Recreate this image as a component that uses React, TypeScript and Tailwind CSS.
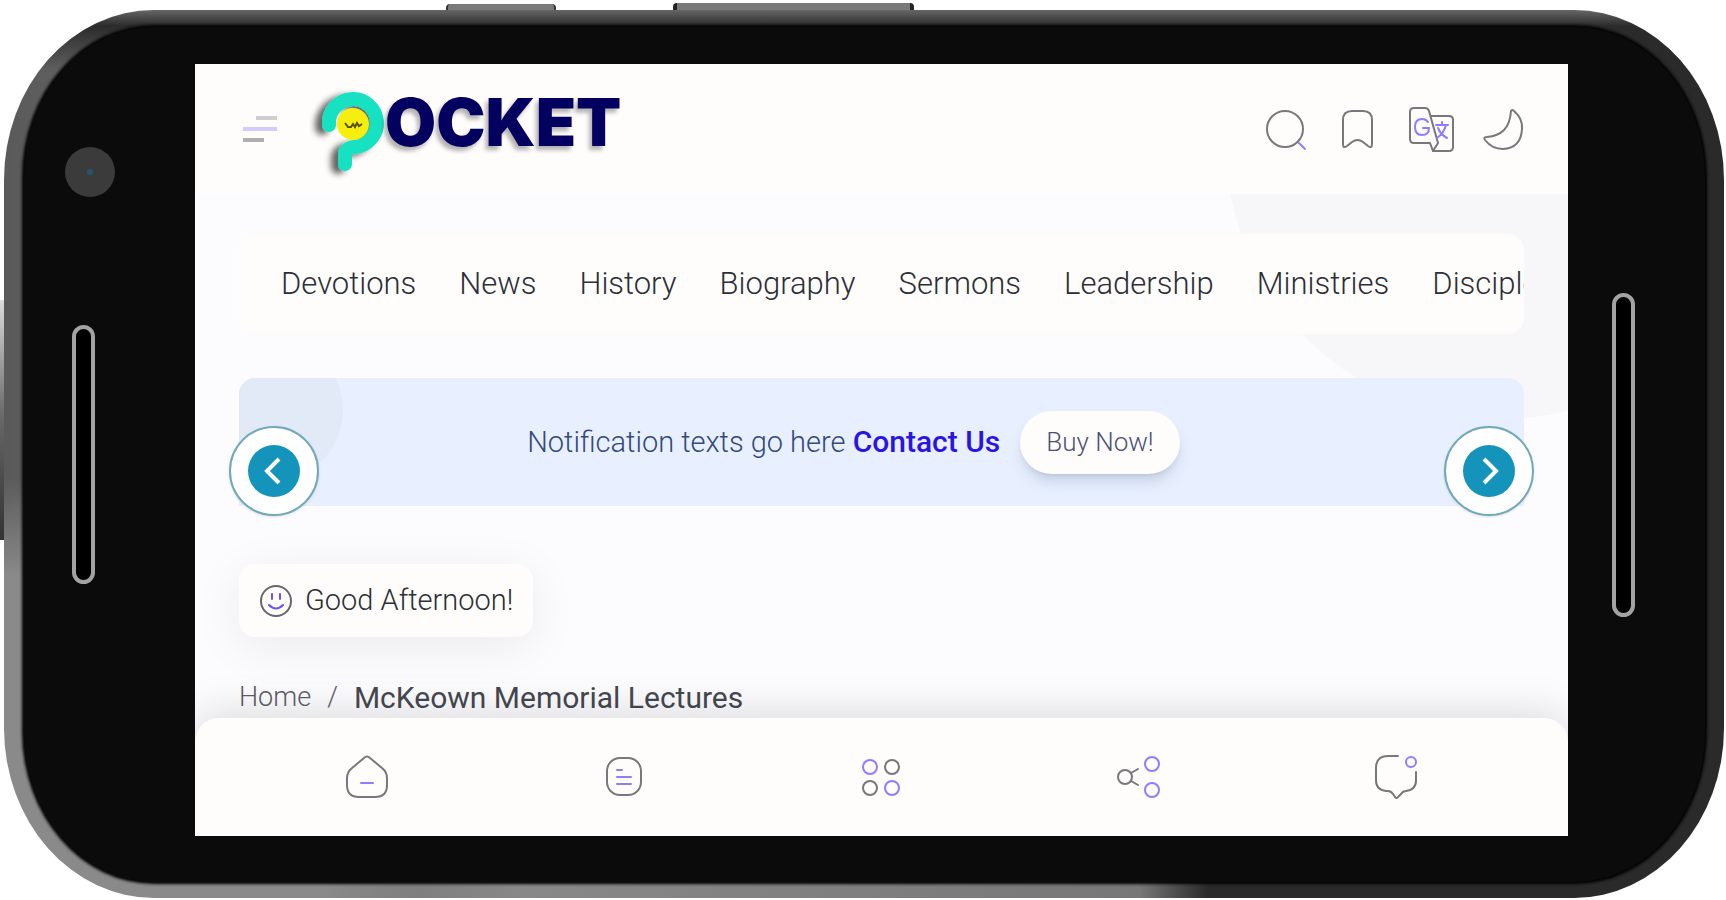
import { ReactNode } from "react";

const tabs = ["Devotions", "News", "History", "Biography", "Sermons", "Leadership", "Ministries", "Disciple"];

const INK = "#77777c";
const ACCENT = "#8f7dff";

function Icon({ children }: { children: ReactNode }) {
  return (
    <svg
      viewBox="0 0 48 48"
      className="size-12"
      fill="none"
      stroke={INK}
      strokeWidth="2"
      strokeLinecap="round"
      strokeLinejoin="round"
      aria-hidden="true"
    >
      {children}
    </svg>
  );
}

const headerActions = [
  {
    label: "Search",
    icon: (
      <Icon>
        <circle cx="21" cy="24" r="18" />
        <path d="M35 38l6 6" stroke={ACCENT} />
      </Icon>
    ),
  },
  {
    label: "Bookmarks",
    icon: (
      <Icon>
        <path d="M7 39V15q0-9 9-9h11q9 0 9 9v24q0 5-4 2l-5-4q-5.500-4-11 0l-5 4q-4 3-4-2z" />
      </Icon>
    ),
  },
  {
    label: "Translate",
    icon: (
      <Icon>
        <path d="M2 7q0-4 4-4h11q3 0 4 3l9 32-5 8-3-8H6q-4 0-4-4z" />
        <path d="M23 11h18q4 0 4 4v27q0 4-4 4H25" />
        <path d="M20 17q-2-3-6-3-7 0-7 8t7 8q7 0 7-7h-6" stroke={ACCENT} />
        <path d="M28 20h12M34 17v3M38 20q-2 8-9 13M30 23q3 7 9 10" stroke={ACCENT} />
      </Icon>
    ),
  },
  {
    label: "Dark mode",
    icon: (
      <Icon>
        <path d="M31 6q1-2 3 0 9 8 8 18-1 19-19 20-11 0-18-9-2-3 2-3 11-1 17-7t7-19z" />
      </Icon>
    ),
  },
];

const bottomActions = [
  {
    label: "Home page",
    icon: (
      <Icon>
        <path d="M21 5q3-3 6 0l12 10q5 4 5 10v7q0 12-12 12H16Q4 44 4 32v-7q0-6 5-10z" />
        <path d="M18 30h12" stroke={ACCENT} />
      </Icon>
    ),
  },
  {
    label: "Articles",
    icon: (
      <Icon>
        <rect x="7" y="5" width="34" height="37" rx="13" />
        <path d="M17 17h5M17 24h14M17 31h14" stroke={ACCENT} />
      </Icon>
    ),
  },
  {
    label: "Menu",
    icon: (
      <Icon>
        <circle cx="13" cy="14" r="7" stroke={ACCENT} />
        <circle cx="35" cy="14" r="7" />
        <circle cx="13" cy="35" r="7" />
        <circle cx="35" cy="35" r="7" stroke={ACCENT} />
      </Icon>
    ),
  },
  {
    label: "Share",
    icon: (
      <Icon>
        <circle cx="10" cy="24" r="7" />
        <path d="M16 20l7-4M16 28l7 4" />
        <circle cx="37" cy="11" r="7" stroke={ACCENT} />
        <circle cx="37" cy="37" r="7" stroke={ACCENT} />
      </Icon>
    ),
  },
  {
    label: "Comments",
    icon: (
      <Icon>
        <path d="M26 3H16Q4 3 4 15v12q0 10 10 11h2q3 0 5 3l2 3q1 2 3 0l3-3q2-3 5-3 10-1 10-11v-8" />
        <circle cx="39" cy="9" r="5" stroke={ACCENT} />
      </Icon>
    ),
  },
];

function Logo() {
  return (
    <a href="#" aria-label="Pocket" className="flex items-center pb-1.5">
      <svg viewBox="0 0 76 84" className="h-[84px] w-[76px] overflow-visible" fill="none" aria-hidden="true">
        <defs>
          <filter id="logo-shadow" x="-40%" y="-40%" width="180%" height="180%">
            <feDropShadow dx="-7" dy="3" stdDeviation="3" floodColor="#000" floodOpacity="0.6" />
          </filter>
        </defs>
        <path
          d="M20 41A24 24 0 1 1 46 63Q36 64 36 71V80"
          stroke="#12e2c2"
          strokeWidth="14"
          strokeLinecap="round"
          filter="url(#logo-shadow)"
        />
        <circle cx="44" cy="40" r="16" fill="#f6ee0c" />
        <path d="M36 39l3 4h3l2-3 2 3 2-4 2 3 3-2" stroke="#56520a" strokeWidth="2" />
      </svg>
      <span className="pb-2 font-[Inter,sans-serif] text-[66px] leading-[80px] font-black text-[#03005f] [text-shadow:-3px_4px_4px_rgba(0,0,0,0.3)]">
        OCKET
      </span>
    </a>
  );
}

function Arrow({ label, d, className }: { label: string; d: string; className: string }) {
  return (
    <button
      type="button"
      aria-label={label}
      className={`absolute top-12 flex size-[90px] items-center justify-center rounded-full border-2 border-[#6fa9ba] bg-white shadow-sm ${className}`}
    >
      <span className="flex size-[52px] items-center justify-center rounded-full bg-[#1494bb]">
        <svg viewBox="0 0 32 32" className="size-8" fill="none" stroke="white" strokeWidth="4" aria-hidden="true">
          <path d={d} />
        </svg>
      </span>
    </button>
  );
}

function Screen() {
  return (
    <div className="flex min-w-0 flex-1 flex-col overflow-hidden bg-[#fcfcff] font-[Roboto,sans-serif] font-light text-[#2c2f36]">
      <header className="relative z-10 flex h-[130px] items-center justify-between bg-[#fffdfc] pr-10 pl-12">
        <div className="flex items-center">
          <button type="button" aria-label="Open menu" className="mr-8 flex w-[34px] flex-col gap-[7px]">
            <span className="h-1 w-[21px] self-end bg-[#cfcfcf]" />
            <span className="h-1 w-full bg-[#d3caff]" />
            <span className="h-1 w-[21px] bg-[#b0b0b0]" />
          </button>
          <Logo />
        </div>
        <div className="flex items-center gap-6">
          {headerActions.map((action) => (
            <button key={action.label} type="button" aria-label={action.label}>
              {action.icon}
            </button>
          ))}
        </div>
      </header>

      <main className="relative flex-1 px-[44px] pt-10">
        <div className="pointer-events-none absolute inset-0 overflow-hidden">
          <div className="absolute -top-[380px] -right-[208px] h-[605px] w-[550px] rounded-full bg-[#f7f7fa]" />
        </div>

        <nav className="relative flex h-[100px] items-center gap-[43px] overflow-hidden rounded-2xl bg-[#fffdfc] pl-[42px]">
          {tabs.map((tab) => (
            <a key={tab} href="#" className="text-[31px] whitespace-nowrap">
              {tab}
            </a>
          ))}
        </nav>

        <section className="relative mt-11 h-32">
          <div className="relative flex h-full items-center justify-center overflow-hidden rounded-t-2xl bg-[#e8f0ff] pr-14">
            <div className="absolute -top-10 -left-10 size-36 rounded-full bg-[#e2eaf8]" />
            <p className="relative text-[29px] whitespace-nowrap text-[#34497c]">
              Notification texts go here{" "}
              <a href="#" className="text-[30px] font-medium text-[#2a14e4]">
                Contact Us
              </a>
            </p>
            <button
              type="button"
              className="relative ml-5 h-[63px] rounded-full bg-[#fffdfc] px-[26px] text-[26px] text-[#4a5274] shadow-lg shadow-slate-400/40"
            >
              Buy Now!
            </button>
          </div>
          <Arrow label="Previous" d="M21 4L9 16l12 12" className="-left-2.5" />
          <Arrow label="Next" d="M11 4l12 12-12 12" className="-right-2.5" />
        </section>

        <div className="relative mt-[58px] flex h-[73px] w-fit items-center gap-3 rounded-2xl bg-[#fffdfc] px-5 shadow-[0_10px_50px_rgba(0,0,0,0.07)]">
          <svg viewBox="0 0 34 34" className="size-[34px]" fill="none" stroke="#66676c" strokeWidth="2" aria-hidden="true">
            <circle cx="17" cy="17" r="15" />
            <path d="M13 10v5M21 10v5M10 21q7 7 14 0" stroke="#6b50ff" strokeLinecap="round" />
          </svg>
          <span className="text-[29px]">Good Afternoon!</span>
        </div>

        <nav aria-label="Breadcrumb" className="relative mt-10 flex h-10 items-center gap-4 whitespace-nowrap">
          <a href="#" className="text-[27px] text-[#5c5e65]">
            Home
          </a>
          <span className="text-[27px] text-[#5c5e65]">/</span>
          <span className="text-[30px] font-normal text-[#45484f]">McKeown Memorial Lectures</span>
        </nav>
      </main>

      <nav className="relative z-10 flex h-[118px] items-center justify-around rounded-t-3xl bg-[#fffdfc] px-[43px] shadow-[0_-6px_40px_rgba(0,0,0,0.13)]">
        {bottomActions.map((action) => (
          <a key={action.label} href="#" aria-label={action.label}>
            {action.icon}
          </a>
        ))}
      </nav>
    </div>
  );
}

export default function App() {
  return (
    <div className="flex min-h-screen flex-col overflow-hidden bg-white pr-0.5 pb-0.5">
      {/* top keys */}
      <div className="flex h-2.5 items-end gap-[117px] pl-[446px]">
        <div className="h-1.5 w-[110px] rounded-t-sm border-x-2 border-[#333] bg-[#7a7a7a]" />
        <div className="h-[7px] w-[241px] rounded-t-sm border-x-4 border-[#222] bg-[#7a7a7a]" />
      </div>

      <div className="flex flex-1">
        {/* side key */}
        <div className="mt-[290px] h-60 w-1 shrink-0 bg-linear-to-b from-[#ddd] via-[#666] to-[#333]" />

        <div className="flex min-w-0 flex-1 rounded-[150px/170px] bg-[linear-gradient(to_bottom,#666,#2b2b2b_16px,transparent_60px),radial-gradient(circle_at_bottom_left,#8a8a8a_320px,transparent_420px),linear-gradient(to_right,#5a5a5a,#888_30%,#777_66%,#2a2a2a_70%)] pt-[17px] pr-[19px] pb-4 pl-5">
          <div className="flex min-w-0 flex-1 rounded-[130px/150px] bg-[#0b0b0b] pt-[37px] pb-[46px] shadow-[0_0_3px_2px_#000]">
            <aside className="flex w-[171px] shrink-0 flex-col pt-[83px] pl-[41px]">
              <div className="flex size-[50px] items-center justify-center rounded-full bg-[#3c3b3b]">
                <span className="size-1.5 rounded-full bg-[#1f5570]" />
              </div>
              <div className="mt-32 ml-[7px] h-[259px] w-[23px] rounded-full border-4 border-[#a3a3a3] bg-black" />
            </aside>
            <Screen />
            <aside className="flex w-[137px] shrink-0 flex-col pt-[229px] pl-11">
              <div className="h-[324px] w-[23px] rounded-full border-4 border-[#a3a3a3] bg-black" />
            </aside>
          </div>
        </div>
      </div>
    </div>
  );
}
